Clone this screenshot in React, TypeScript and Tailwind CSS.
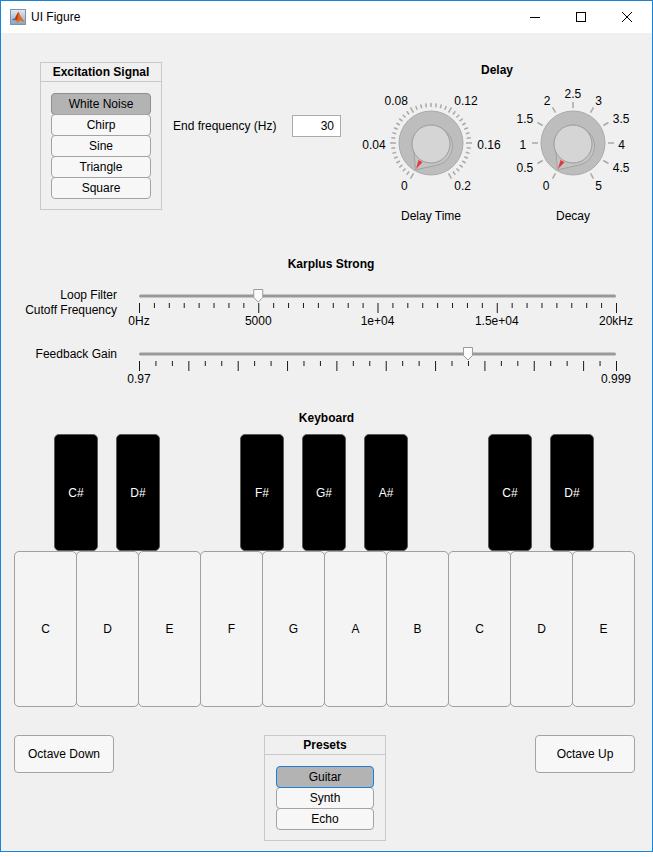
type TickLabel = { t: string; x: number; y: number };
type Tick = { a: number; major: boolean };

const DELAY_LABELS: TickLabel[] = [
  { t: "0", x: -26.7, y: 43.2 },
  { t: "0.04", x: -57, y: 1.5 },
  { t: "0.08", x: -34.7, y: -42.5 },
  { t: "0.12", x: 35, y: -42.5 },
  { t: "0.16", x: 58, y: 1.5 },
  { t: "0.2", x: 31.7, y: 43.2 },
];

const DECAY_LABELS: TickLabel[] = [
  { t: "0", x: -26.8, y: 43 },
  { t: "0.5", x: -48.2, y: 24.7 },
  { t: "1", x: -50.2, y: 2 },
  { t: "1.5", x: -48.2, y: -23.7 },
  { t: "2", x: -25.8, y: -42.3 },
  { t: "2.5", x: -0.2, y: -48.7 },
  { t: "3", x: 25.5, y: -42.3 },
  { t: "3.5", x: 48.2, y: -23.7 },
  { t: "4", x: 48.5, y: 2 },
  { t: "4.5", x: 48.2, y: 24.7 },
  { t: "5", x: 25.5, y: 43 },
];

const DELAY_TICKS: Tick[] = Array.from({ length: 41 }, (_, i) => ({ a: 240 - i * 7.5, major: i % 8 === 0 }));
const DECAY_TICKS: Tick[] = Array.from({ length: 11 }, (_, i) => ({ a: 240 - i * 30, major: true }));

const rad = (deg: number) => (deg * Math.PI) / 180;
const polar = (cx: number, cy: number, r: number, deg: number) => [cx + r * Math.cos(rad(deg)), cy - r * Math.sin(rad(deg))];

// path of a drop: circle with a point running out to (tx, ty)
function dropPath(cx: number, cy: number, r: number, tx: number, ty: number) {
  const dx = tx - cx;
  const dy = ty - cy;
  const d = Math.hypot(dx, dy);
  const base = Math.atan2(dy, dx);
  const off = Math.acos(r / d);
  const p1 = [cx + r * Math.cos(base + off), cy + r * Math.sin(base + off)];
  const p2 = [cx + r * Math.cos(base - off), cy + r * Math.sin(base - off)];
  return `M${tx} ${ty} L${p1[0]} ${p1[1]} A${r} ${r} 0 1 1 ${p2[0]} ${p2[1]} Z`;
}

function Knob({ labels, ticks, title }: { labels: TickLabel[]; ticks: Tick[]; title: string }) {
  const cx = 71;
  const cy = 59;
  const [tx, ty] = polar(cx, cy, 31, 240);
  const [rx, ry] = polar(cx, cy, 30, 240);
  const [bx, by] = polar(cx, cy, 21, 240);
  const px = Math.cos(rad(150)) * 2.3;
  const py = -Math.sin(rad(150)) * 2.3;

  return (
    <div className="flex flex-col w-[142px]">
      <svg width="142" height="112" viewBox="0 0 142 112">
        {ticks.map((k, i) => {
          const [x1, y1] = polar(cx, cy, k.major ? 35 : 36, k.a);
          const [x2, y2] = polar(cx, cy, k.major ? 41 : 40, k.a);
          return <line key={i} x1={x1} y1={y1} x2={x2} y2={y2} stroke="#a9a9a9" strokeWidth="1.5" />;
        })}
        <circle cx={cx} cy={cy} r="32" fill="#bdbdbd" stroke="#aaaaaa" />
        <path d={dropPath(cx + 2, cy + 3, 19.5, tx, ty)} fill="#c4c4c4" stroke="#9a9a9a" strokeWidth="0.8" />
        <circle cx={cx} cy={cy + 1} r="19" fill="#d5d5d5" stroke="#959595" strokeWidth="0.9" />
        <polygon points={`${rx},${ry} ${bx + px},${by + py} ${bx - px},${by - py}`} fill="#e8373c" />
        {labels.map((l) => (
          <text key={l.t} x={cx + l.x} y={cy + l.y} fontSize="12" textAnchor="middle" dominantBaseline="central" fill="#000">
            {l.t}
          </text>
        ))}
      </svg>
      <div className="mt-[13px] h-[14px] leading-[14px] text-center">{title}</div>
    </div>
  );
}

function Slider({ count, majors, labels, thumb }: { count: number; majors: (i: number) => boolean; labels: Record<number, string>; thumb: number }) {
  const x0 = 19;
  const len = 477;
  const at = (i: number) => x0 + (i * len) / count;
  const t = at(thumb);
  return (
    <svg width="525" height="45" viewBox="0 0 525 45">
      <rect x={x0} y="9.5" width={len} height="3" rx="1.5" fill="#999999" />
      {Array.from({ length: count + 1 }, (_, i) => (
        <line key={i} x1={at(i) + 0.5} x2={at(i) + 0.5} y1={18} y2={majors(i) ? 28 : 23} stroke="#1a1a1a" strokeWidth="1" />
      ))}
      <path d={`M${t - 4.5} 4.5 L${t + 4.5} 4.5 L${t + 4.5} 12.5 L${t} 17 L${t - 4.5} 12.5 Z`} fill="#fcfcfc" stroke="#9a9a9a" />
      {Object.entries(labels).map(([i, s]) => (
        <text key={i} x={at(Number(i))} y="35.5" fontSize="12" textAnchor="middle" dominantBaseline="central" fill="#000">
          {s}
        </text>
      ))}
    </svg>
  );
}

function ToggleList({ items, selected, width, focus }: { items: string[]; selected: string; width: string; focus?: boolean }) {
  return (
    <div className={`mt-[11px] mx-auto flex flex-col ${width}`}>
      {items.map((s, i) => (
        <div
          key={s}
          className={`h-[22px] flex items-center justify-center rounded-[4px] border ${i > 0 ? "-mt-px" : ""} ${
            s === selected
              ? focus
                ? "bg-[#b3b3b3] border-[#1a7fd6] relative"
                : "bg-[#b3b3b3] border-[#8e8e8e]"
              : "bg-[#f7f7f7] border-[#a3a3a3]"
          }`}
        >
          {s}
        </div>
      ))}
    </div>
  );
}

function MatlabIcon() {
  return (
    <svg width="16" height="16" viewBox="0 0 16 16">
      <defs>
        <linearGradient id="mlbg" x1="0" y1="0" x2="0" y2="1">
          <stop offset="0" stopColor="#e4ebf2" />
          <stop offset="1" stopColor="#8aa2bb" />
        </linearGradient>
      </defs>
      <rect x="0.5" y="0.5" width="15" height="15" fill="url(#mlbg)" stroke="#7f93a8" />
      <path d="M1.5 11 L5 9 L6.5 11.5 Z" fill="#3d6fa8" />
      <path d="M5 9 L8.5 2.5 L10.5 7 L14.5 13 L10 11.5 L7 14 L6.5 11.5 Z" fill="#e5671f" />
      <path d="M5 9 L8.5 2.5 L7.5 10 L6.5 11.5 Z" fill="#b53c12" />
    </svg>
  );
}

function TitleBar() {
  return (
    <div className="h-[32px] bg-white flex items-center pl-[9px] pr-[20px]">
      <MatlabIcon />
      <span className="ml-[5px] text-[12px]">UI Figure</span>
      <div className="ml-auto flex items-center gap-[36px]">
        <div className="w-[10px] h-px bg-black" />
        <div className="w-[10px] h-[10px] border border-black" />
        <svg width="10" height="10" viewBox="0 0 10 10">
          <path d="M0 0 L10 10 M10 0 L0 10" stroke="#000" strokeWidth="1" />
        </svg>
      </div>
    </div>
  );
}

const WHITE_KEYS = ["C", "D", "E", "F", "G", "A", "B", "C", "D", "E"];
const BLACK_KEYS = [
  { n: "C#", ml: "ml-0" },
  { n: "D#", ml: "ml-[18px]" },
  { n: "F#", ml: "ml-[80px]" },
  { n: "G#", ml: "ml-[18px]" },
  { n: "A#", ml: "ml-[18px]" },
  { n: "C#", ml: "ml-[80px]" },
  { n: "D#", ml: "ml-[18px]" },
];

export default function App() {
  return (
    <div className="w-[653px] h-[852px] border border-[#1883d7] flex flex-col bg-white text-[12px] text-black font-['Liberation_Sans',Arial,sans-serif]">
      <TitleBar />
      <main className="flex-1 bg-[#f0f0f0] flex flex-col">
        {/* Top: excitation, end frequency, delay knobs */}
        <div className="h-[207px] flex items-start">
          <div className="ml-[39px] mt-[29px] w-[122px] h-[148px] border border-[#c9c9c9] flex flex-col">
            <div className="h-[19px] border-b border-[#c9c9c9] flex items-center justify-center font-bold">Excitation Signal</div>
            <ToggleList items={["White Noise", "Chirp", "Sine", "Triangle", "Square"]} selected="White Noise" width="w-[100px]" />
          </div>

          <div className="ml-[11px] mt-[82px] flex items-center">
            <span className="w-[119px]">End frequency (Hz)</span>
            <div className="w-[49px] h-[22px] bg-white border border-[#ababab] flex items-center justify-end pr-[6px]">30</div>
          </div>

          <div className="ml-[19px] mt-[30px] w-[284px] flex flex-col">
            <div className="h-[14px] leading-[14px] font-bold text-center pr-[10px]">Delay</div>
            <div className="mt-[7px] flex">
              <Knob labels={DELAY_LABELS} ticks={DELAY_TICKS} title="Delay Time" />
              <Knob labels={DECAY_LABELS} ticks={DECAY_TICKS} title="Decay" />
            </div>
          </div>
        </div>

        {/* Karplus Strong sliders */}
        <div className="mt-[17px] h-[14px] leading-[14px] font-bold text-center pl-[9px]">Karplus Strong</div>
        <div className="mt-[14px] flex">
          <div className="w-[116px] text-right pt-[3px] leading-[15px]">
            Loop Filter
            <br />
            Cutoff Frequency
          </div>
          <div className="ml-[3px]">
            <Slider count={32} majors={(i) => i % 8 === 0} labels={{ 0: "0Hz", 8: "5000", 16: "1e+04", 24: "1.5e+04", 32: "20kHz" }} thumb={8} />
          </div>
        </div>
        <div className="mt-[13px] flex">
          <div className="w-[116px] text-right pt-[4px] leading-[15px]">Feedback Gain</div>
          <div className="ml-[3px]">
            <Slider count={29} majors={(i) => i % 3 === 0 || i === 29} labels={{ 0: "0.97", 29: "0.999" }} thumb={20} />
          </div>
        </div>

        {/* Keyboard */}
        <div className="mt-[23px] h-[14px] leading-[14px] font-bold text-center">Keyboard</div>
        <div className="mt-[9px] h-[117px] flex pl-[53px]">
          {BLACK_KEYS.map((k, i) => (
            <div key={i} className={`${k.ml} w-[44px] h-full bg-black border border-[#5a5a5a] rounded-[5px] flex items-center justify-center text-white`}>
              {k.n}
            </div>
          ))}
        </div>
        <div className="h-[156px] flex pl-[13px]">
          {WHITE_KEYS.map((k, i) => (
            <div key={i} className={`${i > 0 ? "-ml-px" : ""} w-[63px] h-full bg-[#f4f4f4] border border-[#a0a0a0] rounded-[5px] flex items-center justify-center`}>
              {k}
            </div>
          ))}
        </div>

        {/* Bottom controls */}
        <div className="mt-[28px] flex items-start pl-[13px]">
          <div className="w-[100px] h-[38px] bg-[#f7f7f7] border border-[#a3a3a3] rounded-[4px] flex items-center justify-center">Octave Down</div>
          <div className="ml-[150px] w-[122px] h-[106px] border border-[#c9c9c9] flex flex-col">
            <div className="h-[19px] border-b border-[#c9c9c9] flex items-center justify-center font-bold">Presets</div>
            <ToggleList items={["Guitar", "Synth", "Echo"]} selected="Guitar" width="w-[98px]" focus />
          </div>
          <div className="ml-[149px] w-[100px] h-[38px] bg-[#f7f7f7] border border-[#a3a3a3] rounded-[4px] flex items-center justify-center">Octave Up</div>
        </div>
      </main>
    </div>
  );
}
